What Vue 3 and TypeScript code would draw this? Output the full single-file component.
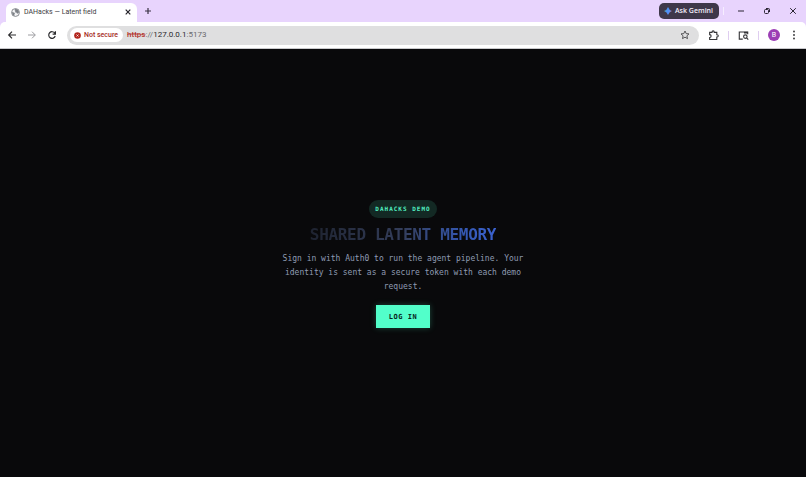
<script setup lang="ts">
import { ref } from 'vue'

const tabTitle = ref('DAHacks — Latent field')
const address = { scheme: 'https', slashes: '://', host: '127.0.0.1', port: ':5173' }
</script>

<template>
  <div class="browser">
    <header class="chrome">
      <div class="tab-strip">
        <div class="tab">
          <svg class="globe" viewBox="0 0 16 16" aria-hidden="true">
            <circle cx="8" cy="8" r="7" fill="#f4f4f6" stroke="#777a80" stroke-width="1.500" />
            <path d="M1.500 7 5 8l2 1.500-1 2V14L3 12.500Z M8 1.500 6 3.500 8 5.500 6.500 7.500l3 .5 1.500 2 3-1.500V6L12 3Z" fill="#7c8086" />
          </svg>
          <span class="tab-title">{{ tabTitle }}</span>
          <button class="icon-button close-tab" type="button" aria-label="Close tab">
            <svg viewBox="0 0 8 8"><path d="M1.700 1.700l4.600 4.600M6.300 1.700l-4.600 4.600" stroke="#25232a" stroke-width="1.200" /></svg>
          </button>
        </div>
        <button class="icon-button new-tab" type="button" aria-label="New tab">
          <svg viewBox="0 0 8 8"><path d="M4 1v6M1 4h6" stroke="#3a3244" stroke-width="1.200" /></svg>
        </button>
        <button class="gemini" type="button">
          <svg viewBox="0 0 16 16" aria-hidden="true">
            <defs>
              <linearGradient id="spark" x1="0" y1="0.300" x2="1" y2="0.700">
                <stop offset="0" stop-color="#58c08a" />
                <stop offset="0.350" stop-color="#4a90f5" />
                <stop offset="0.700" stop-color="#5b8df0" />
                <stop offset="1" stop-color="#e0645c" />
              </linearGradient>
            </defs>
            <path d="M8 0Q10 6 16 8 10 10 8 16 6 10 0 8 6 6 8 0Z" fill="url(#spark)" />
          </svg>
          <span>Ask Gemini</span>
        </button>
        <span class="strip-divider"></span>
        <div class="window-controls">
          <button class="icon-button" type="button" aria-label="Minimize">
            <svg viewBox="0 0 8 8"><path d="M1 4h6" stroke="#2b2533" /></svg>
          </button>
          <button class="icon-button" type="button" aria-label="Restore">
            <svg viewBox="0 0 8 8" fill="none" stroke="#2b2533"><rect x="1.500" y="2.500" width="4" height="4" rx="1" /><path d="M3 1.500h2.500q1 0 1 1V5" /></svg>
          </button>
          <button class="icon-button" type="button" aria-label="Close">
            <svg viewBox="0 0 8 8"><path d="M1.200 1.200l5.600 5.600M6.800 1.200L1.200 6.800" stroke="#2b2533" /></svg>
          </button>
        </div>
      </div>

      <div class="toolbar">
        <nav class="history" aria-label="History">
          <button class="icon-button" type="button" aria-label="Back">
            <svg viewBox="0 0 10 10" fill="none" stroke="#2c2c2e" stroke-width="1.200"><path d="M9 5H1.800M5 1.700 1.700 5 5 8.300" /></svg>
          </button>
          <button class="icon-button" type="button" aria-label="Forward">
            <svg viewBox="0 0 10 10" fill="none" stroke="#9c9ca0"><path d="M1 5h7.200M5 1.700 8.300 5 5 8.300" /></svg>
          </button>
          <button class="icon-button" type="button" aria-label="Reload">
            <svg viewBox="0 0 10 10" fill="none" stroke="#2c2c2e" stroke-width="1.200"><path d="M8.200 6A3.300 3.300 0 1 1 7.800 3.200L8.300 4M8.400 1.300V4.200H5.600" /></svg>
          </button>
        </nav>
        <div class="omnibox">
          <button class="security" type="button">
            <svg viewBox="0 0 8 8" aria-hidden="true"><circle cx="4" cy="4" r="3.800" fill="#b3261e" /><path d="M2.800 2.800l2.400 2.400M5.200 2.800L2.800 5.200" stroke="#fff" stroke-width="0.800" /></svg>
            <span>Not secure</span>
          </button>
          <a class="address" href="https://127.0.0.1:5173"><span class="scheme">{{ address.scheme }}</span><span>{{ address.slashes }}</span><span class="host">{{ address.host }}</span><span>{{ address.port }}</span></a>
          <button class="icon-button" type="button" aria-label="Bookmark this tab">
            <svg viewBox="0 0 10 10" fill="none" stroke="#47474a" stroke-width="0.900"><path d="M5 1l1.200 2.600 2.800.3-2.100 1.900.6 2.800L5 7.200 2.500 8.600l.6-2.800L1 3.900l2.800-.3Z" /></svg>
          </button>
        </div>
        <div class="actions">
          <button class="icon-button" type="button" aria-label="Extensions">
            <svg viewBox="0 0 12 12" fill="none" stroke="#333336" stroke-width="1.200"><path d="M1.800 2.600H4.400V2.200a1.200 1.200 0 0 1 2.400 0v.4H9.600V5.200H10a1.200 1.200 0 0 1 0 2.400H9.600v2.800H1.800V8.200a1.600 1.600 0 0 0 0-3.200Z" /></svg>
          </button>
          <span class="divider"></span>
          <button class="icon-button" type="button" aria-label="Search this page">
            <svg viewBox="0 0 12 12" fill="none" stroke="#333336" stroke-width="1.200"><path d="M5.200 10H1.400V2.200H10.600V4.600" /><path d="M6.500 2.900h4.200" stroke-width="1.800" /><circle cx="8" cy="7.200" r="1.900" /><path d="M9.400 8.600 11.200 10.600" /></svg>
          </button>
          <span class="divider"></span>
          <button class="avatar" type="button" aria-label="Profile">B</button>
          <button class="icon-button menu" type="button" aria-label="Menu">
            <svg viewBox="0 0 10 10" fill="#2f2f32"><circle cx="5" cy="1.500" r="0.900" /><circle cx="5" cy="5" r="0.900" /><circle cx="5" cy="8.500" r="0.900" /></svg>
          </button>
        </div>
      </div>
    </header>

    <main class="page">
      <section class="hero">
        <span class="badge">DAHACKS DEMO</span>
        <h1>SHARED LATENT MEMORY</h1>
        <p>Sign in with Auth0 to run the agent pipeline. Your identity is sent as a secure token with each demo request.</p>
        <button class="login" type="button">LOG IN</button>
      </section>
    </main>
  </div>
</template>

<style>
body {
  margin: 0;
  background: #09090b;
}
</style>

<style scoped>
.browser {
  display: flex;
  flex-direction: column;
  min-height: 100vh;
  font-family: Roboto, "Open Sans", sans-serif;
  font-size: 7px;
  line-height: 10px;
}

button {
  border: 0;
  padding: 0;
  margin: 0;
  background: none;
  color: inherit;
  font: inherit;
}

svg {
  display: block;
  flex: none;
}

.chrome {
  background: #e8d4fd;
  border-bottom: 1px solid #c9c9cc;
}

.tab-strip {
  display: flex;
  align-items: center;
  height: 22px;
  padding: 0 6px;
}

.tab {
  display: flex;
  align-items: center;
  align-self: flex-end;
  box-sizing: border-box;
  width: 131px;
  height: 19px;
  padding: 0 5px 1px;
  border-radius: 6px 6px 0 0;
  background: #fff;
  color: #3e3d43;
}

.globe {
  width: 9px;
  height: 9px;
}

.tab-title {
  flex: 1;
  padding-left: 4px;
  white-space: nowrap;
}

.icon-button {
  display: flex;
  align-items: center;
  justify-content: center;
}

.icon-button svg {
  width: 10px;
  height: 10px;
}

.close-tab svg,
.new-tab svg,
.window-controls svg {
  width: 8px;
  height: 8px;
}

.new-tab {
  margin-left: 7px;
}

.gemini {
  display: flex;
  align-items: center;
  gap: 3px;
  height: 16px;
  margin-left: auto;
  padding: 0 6px 0 5px;
  border-radius: 5px;
  background: #3f384a;
  color: #f5effb;
  font-family: "Open Sans", sans-serif;
  font-weight: 600;
  white-space: nowrap;
}

.gemini svg {
  width: 8px;
  height: 8px;
}

.strip-divider {
  width: 1px;
  height: 8px;
  margin: 0 13px 0 4px;
  background: #f6edff;
}

.window-controls {
  display: flex;
  gap: 18px;
  padding-right: 3px;
}

.toolbar {
  display: flex;
  align-items: center;
  height: 26px;
  padding: 0 7px;
  border-radius: 5px 5px 0 0;
  background: #fff;
}

.history {
  display: flex;
  gap: 10px;
}

.omnibox {
  display: flex;
  align-items: center;
  flex: 1;
  height: 19px;
  margin-left: 10px;
  padding: 0 9px 0 3px;
  border-radius: 10px;
  background: #dfdfe0;
}

.security {
  display: flex;
  align-items: center;
  gap: 3px;
  height: 14px;
  padding: 0 5px 0 4px;
  border-radius: 7px;
  background: #fff;
  color: #a52a24;
  font-weight: 500;
  white-space: nowrap;
}

.security svg {
  width: 7px;
  height: 7px;
}

.address {
  flex: 1;
  padding-left: 4px;
  color: #6a6a6e;
  font-size: 8px;
  text-decoration: none;
}

.scheme {
  color: #b3362f;
  font-weight: 500;
  text-decoration: line-through rgba(179, 54, 47, 0.5);
}

.host {
  color: #29292c;
}

.actions {
  display: flex;
  align-items: center;
  gap: 9px;
  padding-left: 9px;
}

.actions svg {
  width: 11px;
  height: 11px;
}

.actions .menu svg {
  width: 10px;
  height: 10px;
}

.divider {
  width: 1px;
  height: 9px;
  background: #dfcdf0;
}

.avatar {
  width: 12px;
  height: 12px;
  border-radius: 50%;
  background: #9c3eb5;
  color: #fff;
  font-size: 7px;
  text-align: center;
}

.page {
  display: flex;
  flex: 1;
  align-items: center;
  justify-content: center;
  padding-top: 2px;
  background: #09090b;
  font-family: "DejaVu Sans Mono", monospace;
}

.hero {
  display: flex;
  flex-direction: column;
  align-items: center;
  max-width: 252px;
  text-align: center;
}

.badge {
  padding: 4px 6px;
  border-radius: 9px;
  background: #132924;
  color: #52efc0;
  font-size: 6px;
  font-weight: 700;
  letter-spacing: 1px;
}

h1 {
  margin: 7px 0;
  background: linear-gradient(90deg, #1e2330 0%, #343e5b 50%, #3457b0 82%, #3b62d0 100%);
  background-clip: text;
  color: transparent;
  font-size: 16px;
  font-weight: 700;
  line-height: 20px;
  letter-spacing: -0.02em;
  white-space: nowrap;
}

p {
  margin: 0 0 11px;
  color: #8f9bb3;
  font-size: 8px;
  line-height: 14px;
}

.login {
  height: 23px;
  padding: 0 13px;
  background: #52ffca;
  box-shadow: 0 0 6px rgba(82, 255, 202, 0.25);
  color: #08251d;
  font-size: 7px;
  font-weight: 700;
  letter-spacing: 0.08em;
}
</style>
